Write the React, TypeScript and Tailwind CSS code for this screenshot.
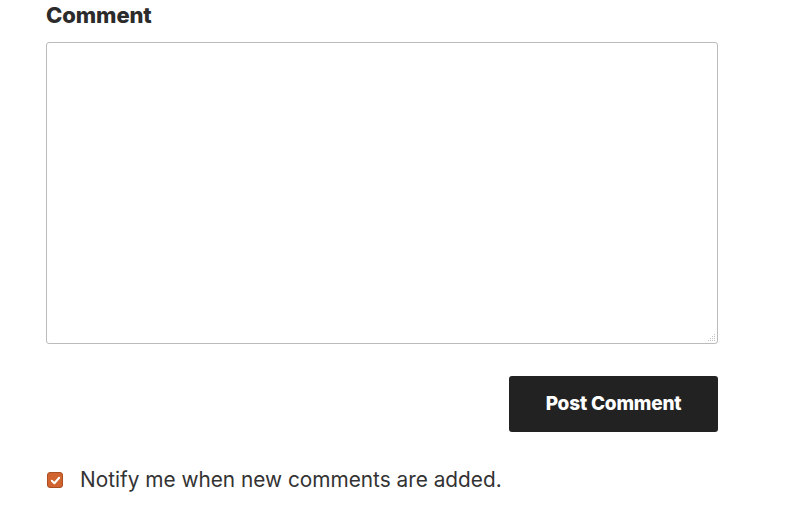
export default function App() {
  return (
    <div className="min-h-screen bg-white pl-[46px] pr-[73px] font-['Inter',sans-serif] text-[#28303d]">
      <label className="block pt-[1px] text-[22px] font-extrabold leading-[28px] tracking-[-0.1px] text-[#2b2b2b]">
        Comment
      </label>
      <div className="relative mt-[13px] w-[672px]">
        <textarea className="block h-[302px] w-[672px] resize-none rounded-[3px] border border-[#bbbbbb] bg-white outline-none" />
        <svg className="absolute bottom-[2px] right-[2px]" width="10" height="10" viewBox="0 0 10 10">
          <g fill="#c4c4c4">
            <rect x="8" y="2" width="1" height="1" />
            <rect x="6" y="4" width="1" height="1" />
            <rect x="8" y="4" width="1" height="1" />
            <rect x="4" y="6" width="1" height="1" />
            <rect x="6" y="6" width="1" height="1" />
            <rect x="8" y="6" width="1" height="1" />
            <rect x="2" y="8" width="1" height="1" />
            <rect x="4" y="8" width="1" height="1" />
            <rect x="6" y="8" width="1" height="1" />
            <rect x="8" y="8" width="1" height="1" />
          </g>
        </svg>
      </div>
      <div className="mt-[32px] flex w-[672px] justify-end">
        <button className="h-[56px] w-[209px] rounded-[3px] bg-[#222222] text-[19px] font-extrabold tracking-[-0.2px] text-white">
          Post Comment
        </button>
      </div>
      <div className="mt-[34px] flex items-center gap-[17px]">
        <span className="ml-[1px] flex h-[16px] w-[16px] items-center justify-center rounded-[3px] border border-[#a94f22] bg-[#d0632e]">
          <svg width="11" height="11" viewBox="0 0 12 12" fill="none">
            <path d="M2 6.3 L4.8 9 L10 3" stroke="white" strokeWidth="2.2" strokeLinecap="round" strokeLinejoin="round" />
          </svg>
        </span>
        <span className="text-[20.8px] leading-[28px] text-[#333333]">
          Notify me when new comments are added.
        </span>
      </div>
    </div>
  );
}
